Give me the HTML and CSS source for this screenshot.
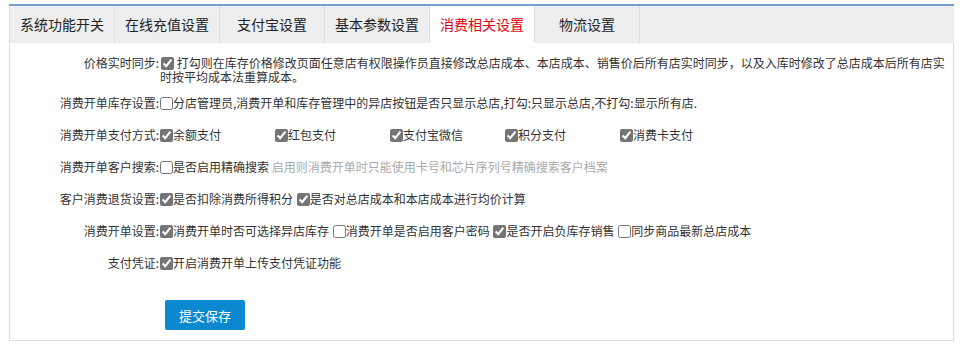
FILE: index.html
```html
<!DOCTYPE html>
<html lang="zh-CN">
<head>
  <meta charset="UTF-8" />
  <meta name="viewport" content="width=device-width, initial-scale=1.0"/>
  <title>消费相关设置</title>
  <link rel="stylesheet" href="styles.css">
</head>
<body>
  <div class="tabs">
    <div class="tab">系统功能开关</div>
    <div class="tab">在线充值设置</div>
    <div class="tab">支付宝设置</div>
    <div class="tab">基本参数设置</div>
    <div class="tab active">消费相关设置</div>
    <div class="tab">物流设置</div>
  </div>

  <div class="panel">
    <div class="row first">
      <div class="label">价格实时同步:</div>
      <div class="field wrap">
        <label><input type="checkbox" checked> 打勾则在库存价格修改页面任意店有权限操作员直接修改总店成本、本店成本、销售价后所有店实时同步，以及入库时修改了总店成本后所有店实时按平均成本法重算成本。</label>
      </div>
    </div>

    <div class="row">
      <div class="label">消费开单库存设置:</div>
      <div class="field">
        <label><input type="checkbox">分店管理员,消费开单和库存管理中的异店按钮是否只显示总店,打勾:只显示总店,不打勾:显示所有店.</label>
      </div>
    </div>

    <div class="row">
      <div class="label">消费开单支付方式:</div>
      <div class="field">
        <label class="pay"><input type="checkbox" checked>余额支付</label><label class="pay"><input type="checkbox" checked>红包支付</label><label class="pay"><input type="checkbox" checked>支付宝微信</label><label class="pay"><input type="checkbox" checked>积分支付</label><label class="pay"><input type="checkbox" checked>消费卡支付</label>
      </div>
    </div>

    <div class="row">
      <div class="label">消费开单客户搜索:</div>
      <div class="field">
        <label><input type="checkbox">是否启用精确搜索</label> <span class="hint">启用则消费开单时只能使用卡号和芯片序列号精确搜索客户档案</span>
      </div>
    </div>

    <div class="row">
      <div class="label">客户消费退货设置:</div>
      <div class="field">
        <label><input type="checkbox" checked>是否扣除消费所得积分</label> <label><input type="checkbox" checked>是否对总店成本和本店成本进行均价计算</label>
      </div>
    </div>

    <div class="row">
      <div class="label">消费开单设置:</div>
      <div class="field">
        <label><input type="checkbox" checked>消费开单时否可选择异店库存</label> <label><input type="checkbox">消费开单是否启用客户密码</label> <label><input type="checkbox" checked>是否开启负库存销售</label> <label><input type="checkbox">同步商品最新总店成本</label>
      </div>
    </div>

    <div class="row">
      <div class="label">支付凭证:</div>
      <div class="field">
        <label><input type="checkbox" checked>开启消费开单上传支付凭证功能</label>
      </div>
    </div>

    <div class="actions">
      <button class="btn-save">提交保存</button>
    </div>
  </div>
</body>
</html>
```

FILE: styles.css
```css
body {
  margin: 4px 9px 0 9px;
  font-family: "Noto Sans CJK SC", "Liberation Sans", sans-serif;
  font-size: 12px;
  color: #333;
  background: #fff;
}

.tabs {
  display: flex;
  height: 37px;
  border-top: 2px solid #6ea3d2;
  background: #eee;
}

.tab {
  width: 104px;
  border-right: 1px solid #ddd;
  text-align: center;
  line-height: 37px;
  font-size: 14px;
  color: #222;
}

.tab:first-child {
  border-left: 1px solid #ddd;
}

.tab.active {
  background: #fff;
  color: #e60012;
}

.panel {
  height: 298px;
  border: 1px solid #ddd;
  border-top: none;
  box-sizing: border-box;
  padding-top: 13px;
}

.row {
  display: flex;
  align-items: center;
  height: 32px;
}

.row.first {
  align-items: flex-start;
  height: auto;
  margin-bottom: 2px;
  line-height: 14px;
}

.label {
  width: 149px;
  flex: none;
  text-align: right;
}

.field {
  flex: 1;
  white-space: nowrap;
}

.field.wrap {
  white-space: normal;
  padding-left: 1px;
}

input[type="checkbox"] {
  width: 13px;
  height: 13px;
  margin: 0 0 0 1px;
  vertical-align: -2px;
  accent-color: #757575;
}

.pay {
  display: inline-block;
  width: 115px;
}

.hint {
  color: #aaa;
}

.actions {
  margin-top: 22px;
  padding-left: 155px;
}

.btn-save {
  width: 80px;
  height: 30px;
  border: none;
  border-radius: 2px;
  background: #0a88d0;
  color: #fff;
  font-family: "Noto Sans CJK SC", sans-serif;
  font-size: 13px;
  cursor: pointer;
}
```
